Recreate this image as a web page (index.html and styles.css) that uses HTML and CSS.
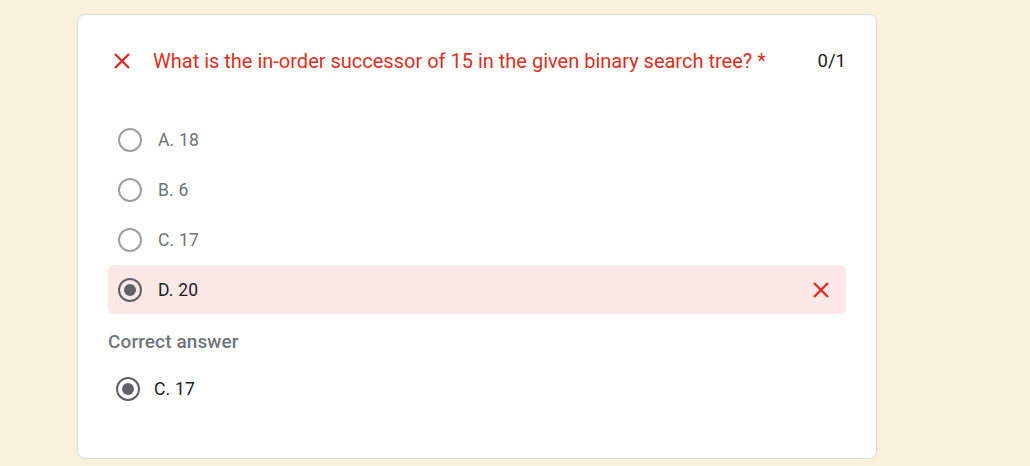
FILE: index.html
```html
<!DOCTYPE html>
<html>
<head>
<meta charset="utf-8">
<link rel="stylesheet" href="styles.css">
</head>
<body>
<div class="page">
  <div class="card">
    <div class="title-row">
      <svg class="x-icon title-x" viewBox="0 0 18 18" width="18" height="18"><path d="M2 2L16 16M16 2L2 16" stroke="#d93025" stroke-width="2.4" fill="none"/></svg>
      <div class="title">What is the in-order successor of 15 in the given binary search tree? *</div>
      <div class="score">0/1</div>
    </div>
    <div class="options">
      <div class="option"><span class="radio"></span><span class="label">A. 18</span></div>
      <div class="option"><span class="radio"></span><span class="label">B. 6</span></div>
      <div class="option"><span class="radio"></span><span class="label">C. 17</span></div>
      <div class="option wrong"><span class="radio checked"></span><span class="label">D. 20</span>
        <svg class="x-icon wrong-x" viewBox="0 0 18 18" width="18" height="18"><path d="M2 2L16 16M16 2L2 16" stroke="#d93025" stroke-width="2.4" fill="none"/></svg>
      </div>
    </div>
    <div class="correct-label">Correct answer</div>
    <div class="option correct"><span class="radio checked"></span><span class="label">C. 17</span></div>
  </div>
</div>
</body>
</html>
```
FILE: styles.css
```css
* { box-sizing: border-box; }
html, body { margin: 0; padding: 0; }
body {
  background: #faf2dd;
  font-family: Roboto, "Liberation Sans", sans-serif;
  width: 1030px;
  height: 466px;
  overflow: hidden;
}
.page {
  padding: 14px 0 0 77px;
}
.card {
  width: 800px;
  height: 445px;
  background: #fff;
  border: 1px solid #dadce0;
  border-radius: 8px;
  padding: 33px 30px 0 30px;
}
.title-row {
  display: flex;
  align-items: center;
  height: 26px;
}
.title-x {
  margin-left: 5px;
  flex: none;
}
.title {
  margin-left: 22px;
  color: #d93025;
  font-size: 20px;
  line-height: 26px;
  flex: 1;
}
.score {
  color: #202124;
  font-size: 18.5px;
  line-height: 26px;
}
.options {
  margin-top: 41px;
}
.option {
  display: flex;
  align-items: center;
  height: 50px;
  padding-left: 10px;
}
.radio {
  width: 24px;
  height: 24px;
  border: 2px solid #9aa0a6;
  border-radius: 50%;
  flex: none;
  display: flex;
  align-items: center;
  justify-content: center;
}
.radio.checked {
  border-color: #5f6368;
}
.radio.checked::after {
  content: "";
  width: 12px;
  height: 12px;
  border-radius: 50%;
  background: #5f6368;
}
.label {
  margin-left: 16px;
  font-size: 17.5px;
  letter-spacing: 0.2px;
  color: #6f7378;
}
.wrong {
  background: #fce8e6;
  border-radius: 6px;
  height: 49px;
}
.wrong .label, .correct .label {
  color: #202124;
}
.wrong-x {
  margin-left: auto;
  margin-right: 16px;
}
.correct-label {
  margin-top: 15px;
  font-size: 19px;
  font-weight: 500;
  line-height: 26px;
  color: #70757a;
  letter-spacing: 0.1px;
}
.option.correct {
  margin-top: 9px;
  padding-left: 8px;
}
.correct .label {
  margin-left: 14px;
}
```
